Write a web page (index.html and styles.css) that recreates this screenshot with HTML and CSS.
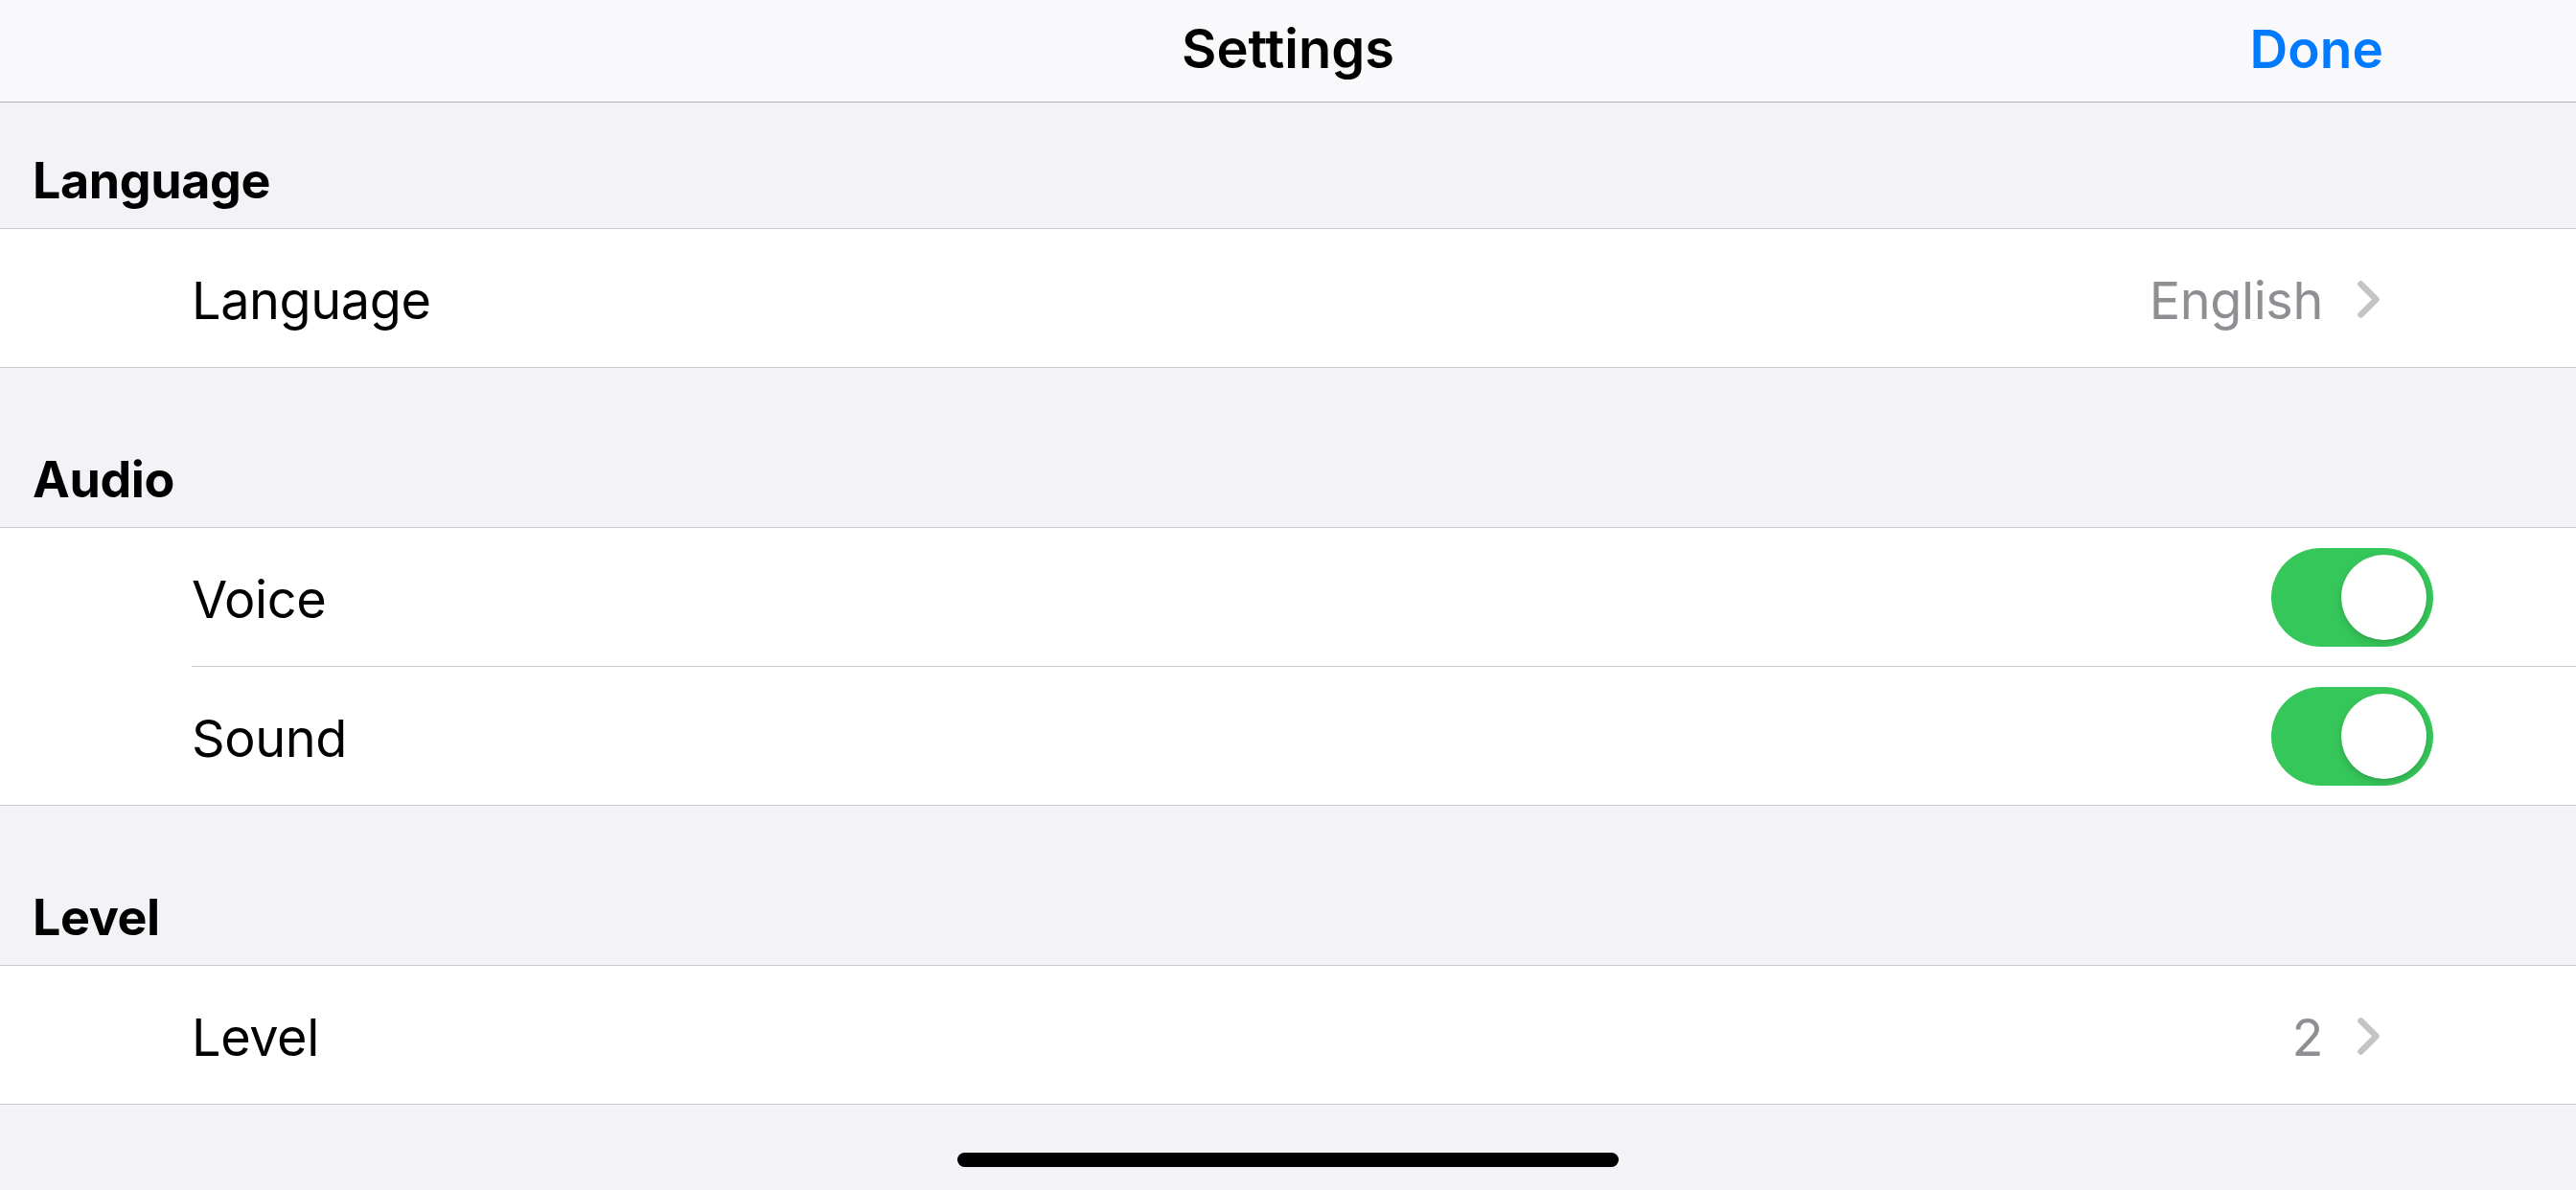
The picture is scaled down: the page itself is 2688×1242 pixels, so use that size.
FILE: index.html
```html
<!DOCTYPE html>
<html>
<head>
<meta charset="utf-8">
<link rel="stylesheet" href="styles.css">
</head>
<body>
<div class="screen">
  <header class="navbar">
    <div class="nav-title">Settings</div>
    <div class="nav-done">Done</div>
  </header>

  <div class="section-header first"><span>Language</span></div>
  <div class="group">
    <div class="cell">
      <span class="cell-label">Language</span>
      <span class="cell-detail">English
        <svg class="chev" width="23" height="39" viewBox="0 0 23 39"><path d="M3.5 3.5 L19.5 19.5 L3.5 35.5" fill="none" stroke="#c4c4c7" stroke-width="6.5" stroke-linecap="round" stroke-linejoin="round"/></svg>
      </span>
    </div>
  </div>

  <div class="section-header"><span>Audio</span></div>
  <div class="group">
    <div class="cell">
      <span class="cell-label">Voice</span>
      <span class="switch"><span class="knob"></span></span>
    </div>
    <div class="cell">
      <span class="cell-label">Sound</span>
      <span class="switch"><span class="knob"></span></span>
    </div>
  </div>

  <div class="section-header"><span>Level</span></div>
  <div class="group">
    <div class="cell">
      <span class="cell-label">Level</span>
      <span class="cell-detail">2
        <svg class="chev" width="23" height="39" viewBox="0 0 23 39"><path d="M3.5 3.5 L19.5 19.5 L3.5 35.5" fill="none" stroke="#c4c4c7" stroke-width="6.5" stroke-linecap="round" stroke-linejoin="round"/></svg>
      </span>
    </div>
  </div>

  <div class="bottom">
    <div class="home-indicator"></div>
  </div>
</div>
</body>
</html>
```

FILE: styles.css
```css
html, body {
  margin: 0;
  padding: 0;
  background: #f2f2f7;
}
body {
  font-family: "Inter", "Noto Sans", "Liberation Sans", sans-serif;
  color: #000;
  -webkit-font-smoothing: antialiased;
}
.screen {
  width: 2688px;
  height: 1242px;
  display: flex;
  flex-direction: column;
  overflow: hidden;
}
.navbar {
  height: 106px;
  flex: none;
  background: #f9f9fb;
  border-bottom: 1px solid #b2b2b6;
  position: relative;
  display: flex;
  align-items: center;
  justify-content: center;
}
.nav-title {
  font-size: 56px;
  font-weight: 600;
  letter-spacing: 0;
  padding-bottom: 4px;
}
.nav-done {
  position: absolute;
  right: 201px;
  top: 0;
  height: 106px;
  display: flex;
  align-items: center;
  padding-bottom: 4px;
  box-sizing: border-box;
  font-size: 55px;
  font-weight: 600;
  color: #007aff;
  letter-spacing: 0;
}
.section-header {
  height: 166px;
  flex: none;
  display: flex;
  align-items: flex-end;
  padding-left: 34px;
  padding-bottom: 18px;
  box-sizing: border-box;
  font-size: 52px;
  font-weight: 700;
  letter-spacing: -0.4px;
}
.section-header.first {
  height: 131px;
}
.group {
  background: #fff;
  border-top: 1px solid #c8c7cc;
  border-bottom: 1px solid #c8c7cc;
  flex: none;
}
.cell {
  height: 144px;
  display: flex;
  align-items: center;
  justify-content: space-between;
  margin-left: 200px;
  padding-right: 149px;
  box-sizing: border-box;
}
.cell + .cell {
  border-top: 1px solid #c8c7cc;
  height: 145px;
}
.cell-label {
  font-size: 54px;
  font-weight: 400;
  letter-spacing: -0.4px;
  padding-top: 4px;
}
.cell-detail {
  display: flex;
  align-items: center;
  gap: 36px;
  font-size: 54px;
  color: #8e8e93;
  letter-spacing: -0.4px;
  margin-right: 56px;
  padding-top: 4px;
}
.chev {
  display: block;
  margin-top: -2px;
}
.switch {
  width: 169px;
  height: 103px;
  border-radius: 52px;
  background: #36c75a;
  position: relative;
  flex: none;
}
.knob {
  position: absolute;
  right: 7px;
  top: 7px;
  width: 89px;
  height: 89px;
  border-radius: 50%;
  background: #fff;
  box-shadow: 0 4px 10px rgba(0, 0, 0, 0.14), 0 1px 2px rgba(0, 0, 0, 0.08);
}
.bottom {
  flex: 1;
  display: flex;
  justify-content: center;
  align-items: flex-start;
  padding-top: 50px;
}
.home-indicator {
  width: 690px;
  height: 15px;
  border-radius: 8px;
  background: #000;
}
```
